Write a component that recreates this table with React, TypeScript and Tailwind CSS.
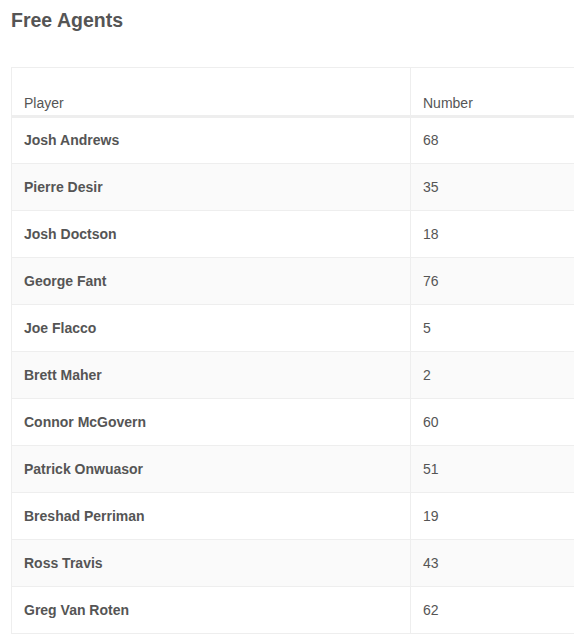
const players = [
  { name: "Josh Andrews", number: 68 },
  { name: "Pierre Desir", number: 35 },
  { name: "Josh Doctson", number: 18 },
  { name: "George Fant", number: 76 },
  { name: "Joe Flacco", number: 5 },
  { name: "Brett Maher", number: 2 },
  { name: "Connor McGovern", number: 60 },
  { name: "Patrick Onwuasor", number: 51 },
  { name: "Breshad Perriman", number: 19 },
  { name: "Ross Travis", number: 43 },
  { name: "Greg Van Roten", number: 62 },
];

export default function App() {
  return (
    <div className="w-[574px] h-[643px] overflow-hidden bg-white text-[#555] font-['Liberation_Sans',Arial,sans-serif]">
      <h2 className="pl-[11px] pt-[9px] text-[19.5px] leading-[22px] font-bold">Free Agents</h2>

      <div className="ml-[11px] mt-[36px] w-[600px]">
        <table className="w-full border-collapse border border-[#eee] text-[14px]">
          <thead>
            <tr className="border-b-[3px] border-[#eee]">
              <th className="w-[399px] h-[49px] px-3 pb-[1px] align-bottom text-left font-normal border-r border-[#eee]">
                Player
              </th>
              <th className="px-3 pb-[1px] align-bottom text-left font-normal">Number</th>
            </tr>
          </thead>
          <tbody>
            {players.map((p, i) => (
              <tr
                key={p.name}
                className={
                  i % 2 === 1 ? "bg-[#fafafa] border-b border-[#eee]" : "bg-white border-b border-[#eee]"
                }
              >
                <td className="h-[47px] px-3 font-bold border-r border-[#eee]">{p.name}</td>
                <td className="h-[47px] px-3">{p.number}</td>
              </tr>
            ))}
          </tbody>
        </table>
      </div>
    </div>
  );
}
